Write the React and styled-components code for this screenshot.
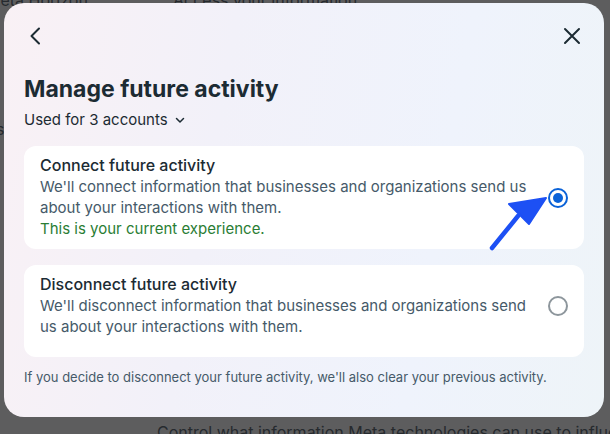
import React from 'react';
import styled, { createGlobalStyle } from 'styled-components';

const GlobalStyle = createGlobalStyle`
  html, body {
    margin: 0;
    padding: 0;
    width: 610px;
    height: 434px;
    overflow: hidden;
    background: #5d5d5e;
    font-family: Inter, "Noto Sans", "Liberation Sans", sans-serif;
  }
`;

const Backdrop = styled.div`
  position: relative;
  width: 610px;
  height: 434px;
  background: #5d5d5e;
  overflow: hidden;
`;

const BehindText = styled.div`
  position: absolute;
  left: ${props => props.x}px;
  top: ${props => props.y}px;
  font-size: 16px;
  color: #262a2e;
  white-space: nowrap;
`;

const Modal = styled.div`
  position: absolute;
  left: 4px;
  top: 3px;
  width: 600px;
  height: 414px;
  box-sizing: border-box;
  border-radius: 20px;
  padding: 9px 20px 0;
  background: linear-gradient(100deg, #f9f1f5 0%, #f2f1f9 35%, #eff3fc 70%, #eef4f8 100%);
  display: flex;
  flex-direction: column;
`;

const Header = styled.div`
  display: flex;
  align-items: center;
  justify-content: space-between;
  height: 48px;
  margin: 0 -4px;
`;

const IconBtn = styled.button`
  display: flex;
  align-items: center;
  justify-content: center;
  width: 32px;
  height: 32px;
  padding: 0;
  border: none;
  background: none;
  color: #1c2b33;
`;

const Title = styled.h1`
  margin: 14px 0 0;
  font-size: 23px;
  line-height: 30px;
  font-weight: 700;
  color: #1c2b33;
`;

const AccountsRow = styled.div`
  display: flex;
  align-items: center;
  gap: 6px;
  margin-top: 6px;
  font-size: 15px;
  line-height: 20px;
  color: #1c2b33;
`;

const Options = styled.div`
  display: flex;
  flex-direction: column;
  gap: 16px;
  margin-top: 16px;
`;

const Card = styled.label`
  display: flex;
  align-items: center;
  gap: 14px;
  background: #fff;
  border-radius: 12px;
  padding: 9px 16px ${props => props.bottom}px;
`;

const CardText = styled.div`
  flex: 1;
  display: flex;
  flex-direction: column;
`;

const CardTitle = styled.div`
  font-size: 16px;
  line-height: 21px;
  font-weight: 500;
  color: #1c2b33;
`;

const CardDesc = styled.div`
  font-size: 15px;
  line-height: 21px;
  color: #465a69;
`;

const CurrentNote = styled.div`
  font-size: 15px;
  line-height: 22px;
  color: #2a7d34;
`;

const Radio = styled.span`
  flex: none;
  width: 20px;
  height: 20px;
  box-sizing: border-box;
  border-radius: 50%;
  border: 2px solid ${props => (props.checked ? '#0a62d8' : '#8d969c')};
  display: flex;
  align-items: center;
  justify-content: center;
  &::after {
    content: '';
    display: ${props => (props.checked ? 'block' : 'none')};
    width: 10px;
    height: 10px;
    border-radius: 50%;
    background: #0a62d8;
  }
`;

const Footnote = styled.p`
  margin: 11px 0 0;
  font-size: 13px;
  line-height: 18px;
  color: #465a69;
`;

const Arrow = styled.svg`
  position: absolute;
  left: 486px;
  top: 186px;
  pointer-events: none;
`;

const ChevronLeft = () => (
  <svg width="24" height="24" viewBox="0 0 24 24" fill="none" stroke="currentColor" strokeWidth="2" strokeLinecap="round" strokeLinejoin="round">
    <path d="M15 4.5 7.5 12l7.5 7.5" />
  </svg>
);

const CloseIcon = () => (
  <svg width="24" height="24" viewBox="0 0 24 24" fill="none" stroke="currentColor" strokeWidth="2" strokeLinecap="round">
    <path d="M5 5l14 14M19 5 5 19" />
  </svg>
);

const ChevronDown = () => (
  <svg width="12" height="12" viewBox="0 0 12 12" fill="none" stroke="currentColor" strokeWidth="1.5" strokeLinecap="round" strokeLinejoin="round">
    <path d="M2.5 4.5 6 8l3.5-3.5" />
  </svg>
);

export default function App() {
  return (
    <Backdrop>
      <GlobalStyle />
      <BehindText x={-14} y={-10}>Meta Horizon</BehindText>
      <BehindText x={173} y={-10}>Access your information</BehindText>
      <BehindText x={-4} y={119}>s</BehindText>
      <BehindText x={157} y={422}>Control what information Meta technologies can use to influence your experience</BehindText>
      <Modal>
        <Header>
          <IconBtn>
            <ChevronLeft />
          </IconBtn>
          <IconBtn>
            <CloseIcon />
          </IconBtn>
        </Header>
        <Title>Manage future activity</Title>
        <AccountsRow>
          Used for 3 accounts
          <ChevronDown />
        </AccountsRow>
        <Options>
          <Card bottom={9}>
            <CardText>
              <CardTitle>Connect future activity</CardTitle>
              <CardDesc>
                We'll connect information that businesses and organizations send us about your interactions with them.
              </CardDesc>
              <CurrentNote>This is your current experience.</CurrentNote>
            </CardText>
            <Radio checked />
          </Card>
          <Card bottom={20}>
            <CardText>
              <CardTitle>Disconnect future activity</CardTitle>
              <CardDesc>
                We'll disconnect information that businesses and organizations send us about your interactions with them.
              </CardDesc>
            </CardText>
            <Radio />
          </Card>
        </Options>
        <Footnote>
          If you decide to disconnect your future activity, we'll also clear your previous activity.
        </Footnote>
      </Modal>
      <Arrow width="64" height="70" viewBox="0 0 64 70">
        <path d="M6 62 L32 30" stroke="#1d50f4" strokeWidth="4.5" strokeLinecap="round" />
        <path d="M60 12 L23 18 L43 38 Z" fill="#1d50f4" stroke="#1d50f4" strokeWidth="2" strokeLinejoin="round" />
      </Arrow>
    </Backdrop>
  );
}
